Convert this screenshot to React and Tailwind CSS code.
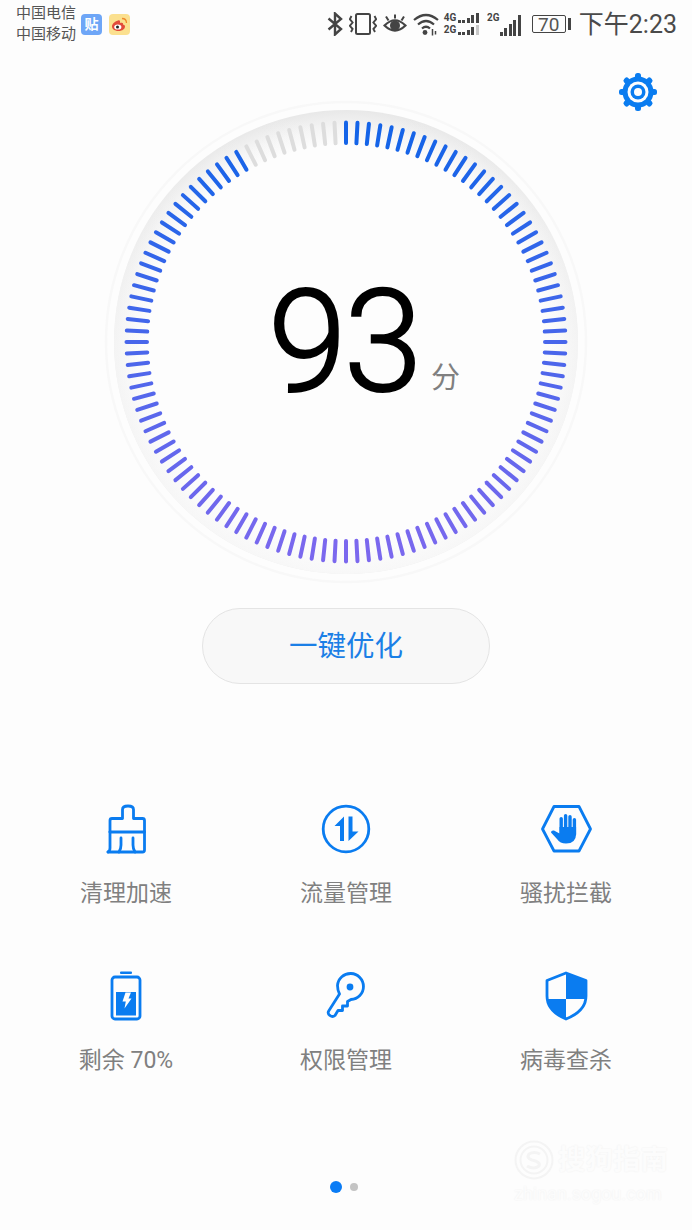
const BLUE = '#0a7cf0'

// 120 ticks round the dial, last 9 are unlit
function Gauge() {
  const cx = 242
  const cy = 242
  const ticks = []
  for (let i = 0; i < 120; i++) {
    const a = (i * 3 * Math.PI) / 180
    const s = Math.sin(a)
    const c = Math.cos(a)
    const t = (1 - c) / 2
    const r = Math.round(20 + (123 - 20) * t)
    const g = Math.round(100 + (104 - 100) * t)
    const b = Math.round(232 + (238 - 232) * t)
    const lit = i < 111
    ticks.push(
      <line
        key={i}
        x1={cx + 199 * s}
        y1={cy - 199 * c}
        x2={cx + 219.5 * s}
        y2={cy - 219.5 * c}
        stroke={lit ? `rgb(${r},${g},${b})` : '#dddddd'}
        strokeWidth="4"
        strokeLinecap="round"
      />
    )
  }
  return (
    <svg width="484" height="484" viewBox="0 0 484 484" className="block">
      <defs>
        <radialGradient id="band" cx="242" cy="242" r="232" gradientUnits="userSpaceOnUse">
          <stop offset="0.85" stopColor="#fdfdfd" />
          <stop offset="0.92" stopColor="#f5f5f5" />
          <stop offset="1" stopColor="#e8e8e8" />
        </radialGradient>
        <linearGradient id="fade" x1="0" y1="0" x2="0" y2="1">
          <stop offset="0" stopColor="#fdfdfd" stopOpacity="0" />
          <stop offset="0.5" stopColor="#fdfdfd" stopOpacity="0.55" />
          <stop offset="1" stopColor="#fdfdfd" stopOpacity="0.75" />
        </linearGradient>
      </defs>
      <circle cx={cx} cy={cy} r="240" fill="none" stroke="#f8f8f8" strokeWidth="2.5" />
      <circle cx={cx} cy={cy} r="232" fill="url(#band)" />
      <circle cx={cx} cy={cy} r="232" fill="url(#fade)" />
      {ticks}
    </svg>
  )
}

function GearIcon() {
  const teeth = []
  for (let i = 0; i < 8; i++) {
    teeth.push(
      <rect key={i} x="17" y="1" width="6" height="6" rx="2.5" fill={BLUE} transform={`rotate(${i * 45} 20 20)`} />
    )
  }
  return (
    <svg width="40" height="40" viewBox="0 0 40 40">
      {teeth}
      <circle cx="20" cy="20" r="15.5" fill={BLUE} />
      <circle cx="20" cy="20" r="10.5" fill="#fdfdfd" />
      <circle cx="20" cy="20" r="7.5" fill={BLUE} />
      <circle cx="20" cy="20" r="4" fill="#fdfdfd" />
    </svg>
  )
}

function BrushIcon() {
  return (
    <svg width="50" height="50" viewBox="101 804 50 50" fill="none" stroke={BLUE} strokeWidth="2.8" strokeLinecap="round" strokeLinejoin="round">
      <path d="M110 832V820.5Q110 818.5 112 818.5H122.5V809.5Q122.5 806 128 806Q133.5 806 133.5 809.5V818.5H142.5Q144.5 818.5 144.5 820.5V850Q144.5 852 142.5 852H108" />
      <path d="M110 832H144.5" />
      <path d="M110 832V848Q110 851 108 852" />
      <path d="M121 838V845Q121 849 119 852" />
      <path d="M133 838V845Q133 849 135 852" />
    </svg>
  )
}

function TrafficIcon() {
  return (
    <svg width="50" height="50" viewBox="321 804 50 50">
      <circle cx="346" cy="829" r="22.8" fill="none" stroke={BLUE} strokeWidth="2.8" />
      <path d="M344 816.5V841H340V826H334.5Z" fill={BLUE} />
      <path d="M348.5 816.5H352.5V831.5H358.5L348.5 841Z" fill={BLUE} />
    </svg>
  )
}

function BlockIcon() {
  return (
    <svg width="56" height="50" viewBox="538 804 56 50">
      <path d="M542.5 829L554 806.5H579L590.5 829L579 851H554Z" fill="none" stroke={BLUE} strokeWidth="2.8" strokeLinejoin="round" />
      <g fill={BLUE}>
        <rect x="559.5" y="817" width="3.4" height="18" rx="1.7" />
        <rect x="563.9" y="814" width="3.4" height="20" rx="1.7" />
        <rect x="568.3" y="815" width="3.4" height="20" rx="1.7" />
        <rect x="572.7" y="818" width="3.4" height="18" rx="1.7" />
        <path d="M559.5 827H576.1V834Q576 843.5 566 843.5Q560 843.5 557 839L551 832.5Q551 830 554 830.5L559.5 833.5Z" />
      </g>
    </svg>
  )
}

function BatteryIcon() {
  return (
    <svg width="50" height="50" viewBox="101 971 50 50">
      <rect x="120" y="971.5" width="12" height="2.6" rx="1" fill={BLUE} />
      <rect x="112" y="977" width="28" height="42" rx="3" fill="none" stroke={BLUE} strokeWidth="2.8" />
      <rect x="116" y="992" width="20" height="23.5" fill={BLUE} />
      <path d="M125.5 992.5H131L128.5 998.5H131.5L124.5 1008.5L125.8 1001.5H122.5Z" fill="#fdfdfd" />
    </svg>
  )
}

function KeyIcon() {
  return (
    <svg width="50" height="50" viewBox="321 971 50 50">
      <path
        d="M337.5 985.5A13 13 0 1 1 351 999.5L347.5 1001.5V1006H342.5V1010.5H338L335 1015.5Q332.5 1017.5 330 1015.5Q327 1013.5 329 1010.5L339.5 994Q337.5 990 337.5 985.5Z"
        fill="none"
        stroke={BLUE}
        strokeWidth="2.8"
        strokeLinejoin="round"
      />
      <circle cx="350" cy="987" r="3.4" fill={BLUE} />
    </svg>
  )
}

function ShieldIcon() {
  return (
    <svg width="50" height="50" viewBox="541 971 50 50">
      <path d="M566 973L586 980.5V996Q586 1011 566 1019Q547 1011 547 996V980.5Z" fill="#fdfdfd" stroke={BLUE} strokeWidth="2.8" strokeLinejoin="round" />
      <path d="M566 973L586 980.5V999H566Z" fill={BLUE} />
      <path d="M566 999V1019Q547 1011 547 999Z" fill={BLUE} />
    </svg>
  )
}

function StatusIcons() {
  const c = '#444444'
  return (
    <div className="flex items-center">
      {/* bluetooth */}
      <svg width="16" height="24" viewBox="0 0 16 24" fill="none" stroke={c} strokeWidth="2.4" className="mr-[6px]">
        <path d="M1.5 6.5L14 17L8 22.5V1.5L14 7L1.5 17.5" />
      </svg>
      {/* vibrate */}
      <svg width="28" height="24" viewBox="0 0 28 24" fill="none" stroke={c} className="mr-[6px]">
        <rect x="7" y="2" width="14" height="20" rx="1.5" strokeWidth="2" />
        <path d="M2.5 4L0.8 7.2L3.6 10.5L0.8 13.8L3.6 17L2 20" strokeWidth="1.9" />
        <path d="M25.5 4L27.2 7.2L24.4 10.5L27.2 13.8L24.4 17L26 20" strokeWidth="1.9" />
      </svg>
      {/* eye comfort */}
      <svg width="24" height="24" viewBox="0 0 24 24" fill="none" stroke={c} className="mr-[6px]">
        <path d="M1.5 13.5Q12 3 22.5 13.5Q12 23.5 1.5 13.5Z" strokeWidth="2.2" />
        <circle cx="12" cy="13.5" r="5" fill={c} stroke="none" />
        <path d="M3 4.5L5.5 8.5M12 2.5V6.5M21 4.5L18.5 8.5" strokeWidth="2" />
      </svg>
      {/* wifi */}
      <svg width="26" height="24" viewBox="0 0 26 24" fill="none" stroke={c} strokeWidth="2.2" className="mr-[5px]">
        <path d="M1 8Q13 -2 25 8" />
        <path d="M5 12.5Q13 5.5 21 12.5" />
        <path d="M9 16.5Q13 13 17 16.5" />
        <circle cx="12" cy="20.5" r="2.4" fill={c} stroke="none" />
        <path d="M19.5 17V23.5M22.5 19V22.5" strokeWidth="1.5" />
      </svg>
      {/* sim 1 / sim 2 */}
      <div className="flex flex-col gap-[2px] mr-[8px]">
        <SimRow label="4G" dim={false} />
        <SimRow label="2G" dim />
      </div>
      <div className="flex items-end mr-[11px] h-[24px]">
        <span className="w-[13px] text-[11px] leading-none font-bold text-[#444444] self-start scale-x-90 origin-left">2G</span>
        <div className="flex items-end gap-[1.5px]">
          <span className="w-[3px] h-[4px] bg-[#444444]" />
          <span className="w-[3px] h-[8px] bg-[#444444]" />
          <span className="w-[3px] h-[12px] bg-[#444444]" />
          <span className="w-[3px] h-[16px] bg-[#444444]" />
          <span className="w-[3px] h-[21px] bg-[#444444]" />
        </div>
      </div>
      {/* battery */}
      <div className="flex items-center mr-[8px]">
        <div className="w-[34px] h-[18px] border border-[#444444] rounded-[2px] flex items-center justify-center text-[19px] leading-none text-[#555555]">
          70
        </div>
        <span className="ml-[2px] w-[3px] h-[12px] bg-[#444444]" />
      </div>
    </div>
  )
}

function SimRow({ label, dim }) {
  const bar = 'w-[3px] bg-[#444444]'
  return (
    <div className="flex items-end h-[10px]">
      <span className="w-[14px] text-[10px] leading-[10px] font-bold text-[#444444]">{label}</span>
      <div className="flex items-end gap-[1.5px]">
        <span className={`${bar} h-[3px]`} />
        <span className={`${bar} h-[3px]`} />
        <span className={`${bar} h-[5px]`} />
        <span className={`${bar} h-[8px]`} />
        <span className={dim ? 'w-[3px] h-[10px] bg-[#c8c8c8]' : `${bar} h-[10px]`} />
      </div>
    </div>
  )
}

function Tool({ icon, label }) {
  return (
    <div className="flex flex-col items-center">
      <div className="h-[50px] flex items-center justify-center">{icon}</div>
      <div className="mt-[25px] text-[23px] leading-[30px] text-[#808080] whitespace-nowrap">{label}</div>
    </div>
  )
}

export default function App() {
  return (
    <div className="relative w-[692px] h-[1230px] overflow-hidden bg-[#fdfdfd] [font-family:Roboto,'Noto_Sans_CJK_SC',sans-serif]">
      {/* status bar */}
      <div className="flex items-center justify-between h-[48px] pl-[16px] pr-[15px]">
        <div className="flex items-center">
          <div className="text-[15px] leading-[21px] text-[#555555]">
            <div>中国电信</div>
            <div>中国移动</div>
          </div>
          <div className="ml-[5px] w-[21px] h-[21px] rounded-[4px] bg-[#6ea6f7] flex items-center justify-center text-[14px] leading-none font-bold text-white">贴</div>
          <div className="ml-[7px] w-[21px] h-[21px] rounded-[4px] bg-[#fbe08f] flex items-center justify-center">
            <svg width="17" height="15" viewBox="0 0 17 15">
              <path d="M7 3.5C3.5 4.5 1 7 1 9.5C1 12.5 4.5 14 7.5 14C11.5 14 14 11.8 14 9.5C14 8 12.5 7.6 12 7.5C12.3 6.5 12 5.5 10 5.8C9.5 6 9 6 9 5.5C9.3 3.5 8.5 3 7 3.5Z" fill="#e24a3b" />
              <ellipse cx="6.8" cy="10" rx="3.6" ry="2.6" fill="#fff" />
              <circle cx="6.5" cy="10" r="1.5" fill="#222" />
              <path d="M11 1.5Q15.5 1.5 15.5 6" fill="none" stroke="#f08a2c" strokeWidth="1.3" />
            </svg>
          </div>
        </div>
        <div className="flex items-center">
          <StatusIcons />
          <span className="text-[25px] leading-none text-[#4a4a4a] whitespace-nowrap">下午2:23</span>
        </div>
      </div>

      {/* settings */}
      <div className="absolute top-[72px] left-[618px]">
        <GearIcon />
      </div>

      {/* score dial */}
      <div className="relative w-[484px] h-[484px] mx-auto mt-[52px]">
        <Gauge />
        <div className="absolute left-[164px] top-[168px] text-[142px] leading-[150px] font-light text-black tracking-[-3px] [-webkit-text-stroke:2px_#000]">93</div>
        <div className="absolute left-[327px] top-[260px] text-[29px] leading-[36px] text-[#808080]">分</div>
      </div>

      {/* optimise button */}
      <div className="mx-auto mt-[24px] w-[288px] h-[76px] pt-[3px] rounded-full border-[1.5px] border-[#e4e4e4] bg-[#f8f8f8] flex items-center justify-center text-[28.5px] text-[#1b7fe6]">
        一键优化
      </div>

      {/* tools */}
      <div className="grid grid-cols-3 gap-y-[62px] px-[16px] mt-[120px]">
        <Tool icon={<BrushIcon />} label="清理加速" />
        <Tool icon={<TrafficIcon />} label="流量管理" />
        <Tool icon={<BlockIcon />} label="骚扰拦截" />
        <Tool icon={<BatteryIcon />} label="剩余 70%" />
        <Tool icon={<KeyIcon />} label="权限管理" />
        <Tool icon={<ShieldIcon />} label="病毒查杀" />
      </div>

      {/* pager */}
      <div className="absolute left-0 right-0 top-[1181px] flex items-center justify-center gap-[8px] pr-[4px]">
        <span className="w-[12px] h-[12px] rounded-full bg-[#0a7cf5]" />
        <span className="w-[8px] h-[8px] rounded-full bg-[#c4c4c4]" />
      </div>

      {/* watermark */}
      <div className="absolute left-[514px] top-[1140px] flex flex-col items-start text-[#fcfcfc] [text-shadow:0_0_2px_#efefef]">
        <div className="flex items-center">
          <svg width="40" height="40" viewBox="0 0 40 40" fill="none" stroke="#f4f4f4" strokeWidth="2">
            <circle cx="20" cy="20" r="18.5" />
            <circle cx="20" cy="20" r="13.5" />
            <path d="M26 14Q20 11 15 14Q12 18 18 20Q27 22 25 26Q20 30 13 26" strokeWidth="3" />
          </svg>
          <span className="ml-[4px] text-[27.5px] leading-none font-bold">搜狗指南</span>
        </div>
        <span className="mt-[5px] text-[18px] leading-none">zhinan.sogou.com</span>
      </div>
    </div>
  )
}
